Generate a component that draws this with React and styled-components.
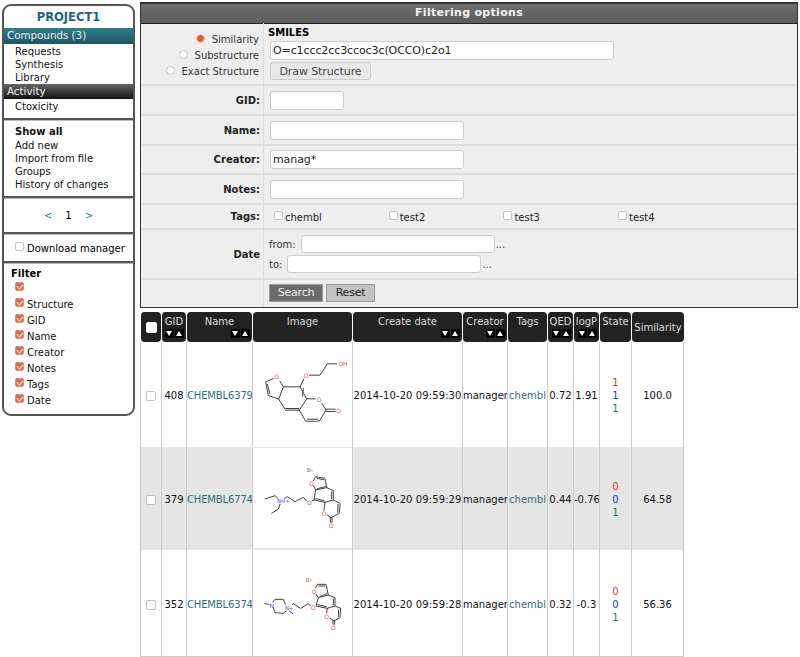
import React from "react";
import styled, { createGlobalStyle } from "styled-components";

const Global = createGlobalStyle`
  html, body { margin: 0; padding: 0; background: #fff; }
  body { font-family: "DejaVu Sans", Verdana, sans-serif; font-size: 10px; color: #000; }
`;

const Page = styled.div`
  display: flex;
  align-items: flex-start;
  width: 800px;
  height: 657px;
  overflow: hidden;
`;

const Sidebar = styled.aside`
  box-sizing: border-box;
  width: 133px;
  height: 412px;
  margin: 4px 5px 0 2px;
  border: 2px solid #555;
  border-radius: 9px;
  overflow: hidden;
  flex: none;
`;

const ProjectTitle = styled.div`
  height: 22px;
  line-height: 22px;
  text-align: center;
  font-weight: bold;
  font-size: 11.5px;
  color: #1f6474;
`;

const SectionBar = styled.div`
  height: ${p => p.$height}px;
  line-height: 14px;
  padding-left: 3px;
  color: #f2f2f2;
  font-size: 10.3px;
  background: ${p =>
    p.$dark
      ? "linear-gradient(#666, #111)"
      : "linear-gradient(#2f7f8d, #1d5560)"};
`;

const NavList = styled.div`
  display: flex;
  flex-direction: column;
  padding: ${p => p.$pad || "0"};
  line-height: 13px;
`;

const NavItem = styled.div`
  padding-left: 11px;
  font-weight: ${p => (p.$bold ? "bold" : "normal")};
  line-height: ${p => (p.$bold ? 14 : 13)}px;
  color: #111;
`;

const Rule = styled.div`
  height: 2px;
  background: #555;
  border-bottom: 1px solid #bbb;
  margin-top: ${p => p.$top || 0}px;
`;

const Pager = styled.div`
  display: flex;
  justify-content: center;
  align-items: center;
  gap: 13px;
  height: 33px;
  a { color: #2a7a8c; }
`;

const DownloadRow = styled.label`
  display: flex;
  align-items: center;
  gap: 3px;
  height: 26px;
  padding-left: 11px;
  white-space: nowrap;
`;

const FilterHead = styled.div`
  font-weight: bold;
  padding: 3px 0 0 7px;
  height: 13px;
  line-height: 13px;
`;

const FilterRow = styled.label`
  display: flex;
  align-items: center;
  gap: 3px;
  height: 16px;
  padding-left: 11px;
  color: #111;
`;

const Check = styled.input.attrs({ type: "checkbox" })`
  appearance: none;
  box-sizing: border-box;
  position: relative;
  width: ${p => p.$size || 9}px;
  height: ${p => p.$size || 9}px;
  margin: 0 0 ${p => (p.$lift ? 3 : 0)}px;
  flex: none;
  border: 1px solid ${p => (p.$plain ? "#fff" : "#c4c4c4")};
  border-radius: 2px;
  background: #fff;
  vertical-align: middle;
  &:checked {
    background: #d9704f;
    border-color: #e08a70;
  }
  &:checked::after {
    content: "";
    position: absolute;
    left: 2px;
    top: 0;
    width: 3px;
    height: 5px;
    border: solid #f7e3dc;
    border-width: 0 1.5px 1.5px 0;
    transform: rotate(45deg);
  }
`;

const Radio = styled.input.attrs({ type: "radio" })`
  appearance: none;
  box-sizing: border-box;
  width: 9px;
  height: 9px;
  margin: 0 0 3px;
  border-radius: 50%;
  border: 1px solid #c4c4c4;
  background: #fff;
  &:checked {
    border-color: #eeb7a4;
    background: radial-gradient(circle, #d9603a 0 3px, #f3d3c7 4px);
  }
`;

const Main = styled.main`
  width: 658px;
  flex: none;
  margin-top: 2px;
`;

const Panel = styled.section`
  box-sizing: border-box;
  height: 306px;
  border: 1px solid #333;
  border-top-width: 2px;
  background: #eee;
`;

const PanelTitle = styled.div`
  height: 19px;
  line-height: 18px;
  text-align: center;
  font-weight: bold;
  font-size: 11px;
  letter-spacing: 0.3px;
  color: #f4f4f4;
  background: linear-gradient(#6e6e6e, #5c5c5c);
  border-bottom: 1px solid #222;
  margin-bottom: -1px;
`;

const FormRow = styled.div`
  display: grid;
  grid-template-columns: 123px 1fr;
  box-sizing: border-box;
  height: ${p => p.$height}px;
  border-bottom: ${p => (p.$last ? "none" : "2px solid #ddd")};
`;

const FormLabel = styled.div`
  display: flex;
  justify-content: flex-end;
  align-items: center;
  padding-right: 3px;
  font-weight: bold;
  color: #222;
  border-right: 1px solid #ddd;
`;

const FormField = styled.div`
  display: flex;
  flex-direction: column;
  justify-content: center;
  padding-left: 6px;
`;

const RadioColumn = styled.div`
  display: flex;
  flex-direction: column;
  justify-content: center;
  gap: 3px;
  padding-right: 4px;
  padding-top: 4px;
  border-right: 1px solid #ddd;
  align-items: flex-end;
`;

const RadioRow = styled.label`
  display: flex;
  align-items: center;
  gap: 7px;
  height: 13px;
  color: #333;
`;

const SmilesHead = styled.div`
  font-weight: bold;
  line-height: 12px;
  margin: 0 0 2px -2px;
`;

const TextInput = styled.input`
  box-sizing: border-box;
  width: ${p => p.$width}px;
  height: 19px;
  padding: 0 2px;
  margin: 0;
  border: 1px solid #ccc;
  border-radius: 3px;
  background: #fff;
  font: 11px "DejaVu Sans", sans-serif;
  letter-spacing: -0.1px;
  color: #222;
  outline: none;
`;

const DateInput = styled(TextInput)`
  height: 18px;
  margin: 0 1px 0 5px;
`;

const DrawButton = styled.button`
  width: 101px;
  height: 18px;
  margin-top: 2px;
  padding: 0;
  border: 1px solid #ccc;
  border-radius: 3px;
  background: #e8e8e8;
  color: #444;
  font: 11px "DejaVu Sans", sans-serif;
  letter-spacing: -0.1px;
`;

const TagGrid = styled.div`
  display: grid;
  grid-template-columns: repeat(4, 114.7px);
  align-items: center;
  height: 100%;
  padding: 1px 0 0 10px;
  box-sizing: border-box;
`;

const TagItem = styled.label`
  display: flex;
  align-items: center;
  gap: 2px;
  color: #222;
`;

const DateRow = styled.div`
  display: flex;
  align-items: center;
  height: 20px;
  margin-left: -1px;
  color: #333;
`;

const ActionRow = styled.div`
  display: flex;
  align-items: center;
  gap: 3px;
  height: 100%;
  padding: 0 0 2px 5px;
  box-sizing: border-box;
`;

const ActionButton = styled.button`
  box-sizing: border-box;
  width: ${p => p.$width}px;
  height: 18px;
  padding: 0;
  border: 1px solid #999;
  background: ${p => (p.$primary ? "#6b6b6b" : "#c4c4c4")};
  color: ${p => (p.$primary ? "#eee" : "#222")};
  font: 11px "DejaVu Sans", sans-serif;
  letter-spacing: -0.2px;
`;

const Table = styled.table`
  margin-top: 4px;
  table-layout: fixed;
  border-collapse: separate;
  border-spacing: 0;
  width: 544px;
`;

const Head = styled.th`
  box-sizing: border-box;
  height: 30px;
  padding: ${p => (p.$middle ? "1px 0 0" : "3px 0 0")};
  font-weight: normal;
  font-size: 10px;
  color: #ddd;
  background: #222;
  border-radius: 4px;
  border-left: 1px solid #fff;
  text-align: center;
  vertical-align: ${p => (p.$middle ? "middle" : "top")};
  line-height: 14px;
  white-space: nowrap;
`;

const Sorters = styled.div`
  display: flex;
  justify-content: flex-end;
  gap: 1px;
  padding-right: 2px;
  height: 9px;
`;

const SortBox = styled.span`
  display: block;
  width: 9px;
  height: 9px;
  background: #000;
  position: relative;
  &::after {
    content: "";
    position: absolute;
    left: 1px;
    ${p => (p.$up ? "top: 2px; border-bottom: 5px solid #fff;" : "top: 2px; border-top: 5px solid #fff;")}
    border-left: 3.5px solid transparent;
    border-right: 3.5px solid transparent;
  }
`;

const Row = styled.tr`
  height: ${p => p.$height}px;
  background: ${p => (p.$shade ? "#e5e5e5" : "#fff")};
  &:last-child td { border-bottom: 1px solid #ccc; }
`;

const Cell = styled.td`
  box-sizing: border-box;
  padding: 2px 0 0;
  border-left: 1px solid #ccc;
  text-align: ${p => p.$align || "center"};
  white-space: nowrap;
  overflow: hidden;
  font-size: 10px;
  letter-spacing: ${p => p.$tight || 0}px;
  color: #111;
  &:last-child { border-right: 1px solid #ccc; }
`;

const ImageCell = styled(Cell)`
  padding: 0;
  background: #fff;
  background-clip: padding-box;
  border-top: 1px solid transparent;
  border-bottom: 2px solid transparent;
`;

const Link = styled.a`
  color: #2c6e7e;
`;

const StateStack = styled.div`
  display: flex;
  flex-direction: column;
  line-height: 13px;
`;

const StateNum = styled.span`
  color: ${p => p.$color};
`;

const MolSvg = styled.svg`
  display: block;
  width: 99px;
  height: 100px;
  margin: 0 auto;
`;

const Bonds = ({ d, color = "#333" }) => (
  <path d={d} fill="none" stroke={color} strokeWidth="2.8" strokeLinecap="round" strokeLinejoin="round" />
);

const Atom = ({ x, y, color, size = 18, children }) => (
  <text x={x} y={y} fill={color} fontSize={size} fontFamily="DejaVu Sans" textAnchor="middle" dominantBaseline="central">
    {children}
  </text>
);

const RED = "#f05050";
const BLUE = "#4a50f0";
const BROWN = "#a8806a";

const MolOne = () => (
  <MolSvg viewBox="9 13.5 297 300">
    <Bonds d="M70 117L47 127L55 168L86 179L100 142L90 126M52 135L60 163M100 142L150 142L170 178L148 212L107 212L86 179M108 207L146 207M160 147L158 170M148 212L167 245L208 245L228 212L216 192M172 239L204 239M170 178L196 178" />
    <Bonds d="M150 142L161 119M178 107L210 107L232 73L260 73M228 209L255 209M228 216L255 216" />
    <Atom x={80} y={112} color={RED}>O</Atom>
    <Atom x={168} y={108} color={RED}>O</Atom>
    <Atom x={207} y={180} color={RED}>O</Atom>
    <Atom x={266} y={212} color={RED}>O</Atom>
    <Atom x={279} y={73} color={RED}>OH</Atom>
  </MolSvg>
);

const MolTwo = () => (
  <MolSvg viewBox="9 9 297 300">
    <Bonds d="M190 122L197 135L230 128L250 137L250 165L225 172L192 165L197 135M190 107L197 95L225 100L230 128M201 100L221 104M245 141L245 161M222 167L197 161M202 131L226 125" />
    <Bonds d="M250 165L270 175L268 205L243 218L232 210M264 178L263 202M225 172L222 196M241 218L241 232M246 218L246 232" />
    <Bonds d="M186 168L192 165M170 168L160 157L135 170L112 155L104 160M84 160L75 152L45 162M90 178L85 192L65 205" />
    <Atom x={180} y={75} color={BROWN} size={16}>Br.</Atom>
    <Atom x={185} y={115} color={RED}>O</Atom>
    <Atom x={178} y={172} color={RED}>O</Atom>
    <Atom x={222} y={205} color={RED}>O</Atom>
    <Atom x={244} y={241} color={RED}>O</Atom>
    <Atom x={100} y={168} color={BLUE} size={16}>NH+</Atom>
  </MolSvg>
);

const MolThree = () => (
  <MolSvg viewBox="9 9 297 300">
    <Bonds d="M198 130L205 140L235 132L255 140L255 165L232 172L198 165L205 140M197 110L203 100L228 100L235 132M207 105L224 105M250 144L250 161M229 167L203 161M210 136L231 128" />
    <Bonds d="M255 165L272 172L270 200L252 210L240 202M266 176L265 197M232 172L230 186M249 210L249 220M254 210L254 220" />
    <Bonds d="M181 165L175 158L152 172L130 158L127 161M106 160L100 145L75 145L69 153M57 160L45 158M70 170L75 185L100 187L108 180M118 180L128 188" />
    <Atom x={178} y={87} color={BROWN} size={16}>Br-</Atom>
    <Atom x={192} y={120} color={RED}>O</Atom>
    <Atom x={190} y={170} color={RED}>O</Atom>
    <Atom x={230} y={197} color={RED}>O</Atom>
    <Atom x={250} y={228} color={RED}>O</Atom>
    <Atom x={65} y={162} color={BLUE}>N</Atom>
    <Atom x={118} y={170} color={BLUE} size={16}>N+</Atom>
  </MolSvg>
);

const COLUMNS = [
  { width: 21, check: true, middle: true },
  { title: "GID", width: 25, sort: true },
  { title: "Name", width: 66, sort: true },
  { title: "Image", width: 100 },
  { title: "Create date", width: 110, sort: true },
  { title: "Creator", width: 45, sort: true },
  { title: "Tags", width: 40 },
  { title: "QED", width: 26, sort: true },
  { title: "logP", width: 26, sort: true },
  { title: "State", width: 32 },
  { title: "Similarity", width: 53, middle: true }
];

const ROWS = [
  { gid: 408, name: "CHEMBL6379", mol: <MolOne />, date: "2014-10-20 09:59:30", qed: "0.72", logp: "1.91", state: [1, 1, 1], sim: "100.0", height: 105 },
  { gid: 379, name: "CHEMBL6774", mol: <MolTwo />, date: "2014-10-20 09:59:29", qed: "0.44", logp: "-0.76", state: [0, 0, 1], sim: "64.58", height: 103, shade: true },
  { gid: 352, name: "CHEMBL6374", mol: <MolThree />, date: "2014-10-20 09:59:28", qed: "0.32", logp: "-0.3", state: [0, 0, 1], sim: "56.36", height: 107 }
];

const STATE_COLORS = ["#e0352b", "#1f2fd8", "#1f7a3a"];
const FILTERS = ["", "Structure", "GID", "Name", "Creator", "Notes", "Tags", "Date"];
const TAGS = ["chembl", "test2", "test3", "test4"];

const App = () => (
  <Page>
    <Global />
    <Sidebar>
      <ProjectTitle>PROJECT1</ProjectTitle>
      <SectionBar $height={16}>Compounds (3)</SectionBar>
      <NavList $pad="1px 0 0">
        <NavItem>Requests</NavItem>
        <NavItem>Synthesis</NavItem>
        <NavItem>Library</NavItem>
      </NavList>
      <SectionBar $dark $height={15}>Activity</SectionBar>
      <NavList $pad="1px 0 0">
        <NavItem>Ctoxicity</NavItem>
      </NavList>
      <Rule $top={5} />
      <NavList $pad="4px 0 5px">
        <NavItem $bold>Show all</NavItem>
        <NavItem>Add new</NavItem>
        <NavItem>Import from file</NavItem>
        <NavItem>Groups</NavItem>
        <NavItem>History of changes</NavItem>
      </NavList>
      <Rule />
      <Pager>
        <a>&lt;</a>
        <span>1</span>
        <a>&gt;</a>
      </Pager>
      <Rule />
      <DownloadRow>
        <Check $lift />
        Download manager
      </DownloadRow>
      <Rule />
      <FilterHead>Filter</FilterHead>
      {FILTERS.map(f => (
        <FilterRow key={f}>
          <Check $lift defaultChecked />
          {f}
        </FilterRow>
      ))}
    </Sidebar>
    <Main>
      <Panel>
        <PanelTitle>Filtering options</PanelTitle>
        <FormRow $height={63}>
          <RadioColumn>
            <RadioRow><Radio name="mode" defaultChecked />Similarity</RadioRow>
            <RadioRow><Radio name="mode" />Substructure</RadioRow>
            <RadioRow><Radio name="mode" />Exact Structure</RadioRow>
          </RadioColumn>
          <FormField>
            <SmilesHead>SMILES</SmilesHead>
            <TextInput $width={344} defaultValue="O=c1ccc2cc3ccoc3c(OCCO)c2o1" />
            <DrawButton>Draw Structure</DrawButton>
          </FormField>
        </FormRow>
        <FormRow $height={30}>
          <FormLabel>GID:</FormLabel>
          <FormField><TextInput $width={74} /></FormField>
        </FormRow>
        <FormRow $height={30}>
          <FormLabel>Name:</FormLabel>
          <FormField><TextInput $width={194} /></FormField>
        </FormRow>
        <FormRow $height={29}>
          <FormLabel>Creator:</FormLabel>
          <FormField><TextInput $width={194} defaultValue="manag*" /></FormField>
        </FormRow>
        <FormRow $height={30}>
          <FormLabel>Notes:</FormLabel>
          <FormField><TextInput $width={194} /></FormField>
        </FormRow>
        <FormRow $height={25}>
          <FormLabel>Tags:</FormLabel>
          <TagGrid>
            {TAGS.map(t => (
              <TagItem key={t}><Check $lift />{t}</TagItem>
            ))}
          </TagGrid>
        </FormRow>
        <FormRow $height={50}>
          <FormLabel>Date</FormLabel>
          <FormField>
            <DateRow>from:<DateInput $width={194} />...</DateRow>
            <DateRow>to:<DateInput $width={194} />...</DateRow>
          </FormField>
        </FormRow>
        <FormRow $height={27} $last>
          <FormLabel />
          <ActionRow>
            <ActionButton $primary $width={54}>Search</ActionButton>
            <ActionButton $width={49}>Reset</ActionButton>
          </ActionRow>
        </FormRow>
      </Panel>
      <Table>
        <colgroup>
          {COLUMNS.map((c, i) => <col key={i} width={c.width} />)}
        </colgroup>
        <thead>
          <tr>
            {COLUMNS.map((c, i) => (
              <Head key={i} $middle={c.middle}>
                {c.check && <Check $size={11} $plain />}
                {c.title}
                {c.sort && (
                  <Sorters>
                    <SortBox />
                    <SortBox $up />
                  </Sorters>
                )}
              </Head>
            ))}
          </tr>
        </thead>
        <tbody>
          {ROWS.map(r => (
            <Row key={r.gid} $height={r.height} $shade={r.shade}>
              <Cell><Check $size={10} /></Cell>
              <Cell>{r.gid}</Cell>
              <Cell $align="left" $tight={-0.15}><Link>{r.name}</Link></Cell>
              <ImageCell>{r.mol}</ImageCell>
              <Cell $tight={0.1}>{r.date}</Cell>
              <Cell>manager</Cell>
              <Cell><Link>chembl</Link></Cell>
              <Cell>{r.qed}</Cell>
              <Cell>{r.logp}</Cell>
              <Cell>
                <StateStack>
                  {r.state.map((s, i) => <StateNum key={i} $color={STATE_COLORS[i]}>{s}</StateNum>)}
                </StateStack>
              </Cell>
              <Cell>{r.sim}</Cell>
            </Row>
          ))}
        </tbody>
      </Table>
    </Main>
  </Page>
);

export default App;
